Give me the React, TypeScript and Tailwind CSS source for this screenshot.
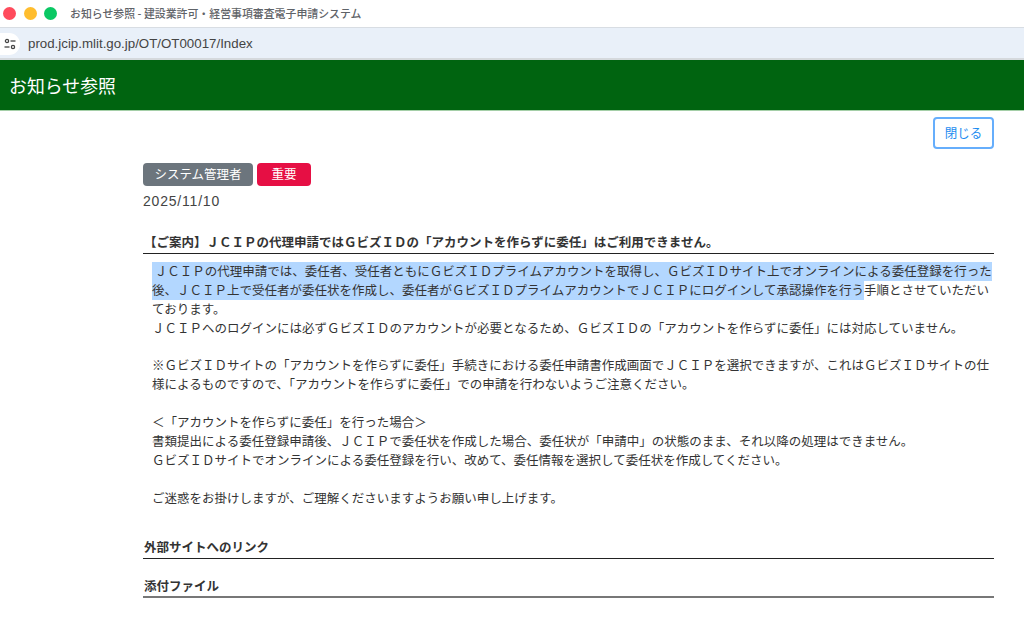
import React from "react";

const FONT = "font-['Hiragino_Sans','Noto_Sans_CJK_JP','Liberation_Sans',sans-serif]";

function Heading({ children, thick }: { children: React.ReactNode; thick?: boolean }) {
  return (
    <div className={thick ? "border-b-2 border-[#777] pl-px h-[20px] leading-[16px] text-[12.5px] font-bold text-[#333]" : "border-b border-[#222] pl-px h-[20px] leading-[16px] text-[12.5px] font-bold text-[#333]"}>
      {children}
    </div>
  );
}

function Line({ children }: { children?: React.ReactNode }) {
  return <div className="h-[18.9px] whitespace-nowrap">{children}</div>;
}

function Sel({ children }: { children: React.ReactNode }) {
  return <span className="inline-block h-[18.9px] bg-[#b3d7ff]">{children}</span>;
}

export default function App() {
  return (
    <div className={`h-[618px] w-[1024px] overflow-hidden bg-white ${FONT}`}>
      {/* browser chrome */}
      <div className="flex h-[28px] items-center border-b border-[#d8dde3] bg-white">
        <div className="ml-[3px] flex items-center gap-[7.5px]">
          <div className="h-[13px] w-[13px] rounded-full bg-[#ff4b5c]" />
          <div className="h-[13px] w-[13px] rounded-full bg-[#ffbd2e]" />
          <div className="h-[13px] w-[13px] rounded-full bg-[#0ac864]" />
        </div>
        <span className="ml-[13px] text-[10.9px] font-medium text-[#5f6368]">
          お知らせ参照 - 建設業許可・経営事項審査電子申請システム
        </span>
      </div>
      <div className="flex h-[30px] items-center bg-[#e9f0f9] pt-[2px]">
        <div className="flex h-[22px] w-[20px] items-center justify-center rounded-r-full bg-white">
          <svg width="14" height="14" viewBox="0 0 14 14" fill="none" stroke="#444" strokeWidth="1.3">
            <circle cx="4" cy="4" r="1.6" />
            <path d="M7.5 4H12.5" />
            <circle cx="10" cy="10" r="1.6" />
            <path d="M1.5 10H6.5" />
          </svg>
        </div>
        <span className="ml-[8px] font-['Liberation_Sans',sans-serif] text-[13.3px] text-[#444]">
          prod.jcip.mlit.go.jp/OT/OT00017/Index
        </span>
      </div>
      <div className="h-[2px] bg-[#d5d9dd]" />

      {/* page header */}
      <header className="flex h-[51px] items-center border-b border-[#a5cfa8] bg-[#006410] pl-[9px] text-[17.9px] text-white">
        お知らせ参照
      </header>

      <div className="flex justify-end pr-[30px] pt-[6px]">
        <button
          type="button"
          className="h-[32px] w-[61px] rounded-[4px] border-2 border-[#66aefc] bg-white text-[12.5px] text-[#1d8cf0]"
        >
          閉じる
        </button>
      </div>

      <main className="pl-[143px] pr-[30px] text-[12.5px] text-[#333]">
        <div className="mt-[14px] flex gap-[4px]">
          <span className="flex h-[23px] w-[110px] items-center justify-center rounded-[4px] bg-[#6c757d] text-white">
            システム管理者
          </span>
          <span className="flex h-[23px] w-[54px] items-center justify-center rounded-[4px] bg-[#e60f44] text-white">
            重要
          </span>
        </div>
        <div className="mt-[6px] h-[18px] font-['Liberation_Sans',sans-serif] text-[14px] leading-[18px] tracking-[0.8px] text-[#444]">
          2025/11/10
        </div>

        <div className="mt-[24px]">
          <Heading>【ご案内】ＪＣＩＰの代理申請ではＧビズＩＤの「アカウントを作らずに委任」はご利用できません。</Heading>
        </div>

        <div className="ml-[9px] mt-[8px] leading-[18.9px]">
          <Line>
            <Sel>&nbsp;ＪＣＩＰの代理申請では、委任者、受任者ともにＧビズＩＤプライムアカウントを取得し、ＧビズＩＤサイト上でオンラインによる委任登録を行った</Sel>
          </Line>
          <Line>
            <Sel>後、ＪＣＩＰ上で受任者が委任状を作成し、委任者がＧビズＩＤプライムアカウントでＪＣＩＰにログインして承認操作を行う</Sel>手順とさせていただい
          </Line>
          <Line>ております。</Line>
          <Line>ＪＣＩＰへのログインには必ずＧビズＩＤのアカウントが必要となるため、ＧビズＩＤの「アカウントを作らずに委任」には対応していません。</Line>
          <Line />
          <Line>※ＧビズＩＤサイトの「アカウントを作らずに委任」手続きにおける委任申請書作成画面でＪＣＩＰを選択できますが、これはＧビズＩＤサイトの仕</Line>
          <Line>様によるものですので、「アカウントを作らずに委任」での申請を行わないようご注意ください。</Line>
          <Line />
          <Line>＜「アカウントを作らずに委任」を行った場合＞</Line>
          <Line>書類提出による委任登録申請後、ＪＣＩＰで委任状を作成した場合、委任状が「申請中」の状態のまま、それ以降の処理はできません。</Line>
          <Line>ＧビズＩＤサイトでオンラインによる委任登録を行い、改めて、委任情報を選択して委任状を作成してください。</Line>
          <Line />
          <Line>ご迷惑をお掛けしますが、ご理解くださいますようお願い申し上げます。</Line>
        </div>

        <div className="mt-[31px]">
          <Heading>外部サイトへのリンク</Heading>
        </div>
        <div className="mt-[19px]">
          <Heading thick>添付ファイル</Heading>
        </div>
      </main>
    </div>
  );
}
